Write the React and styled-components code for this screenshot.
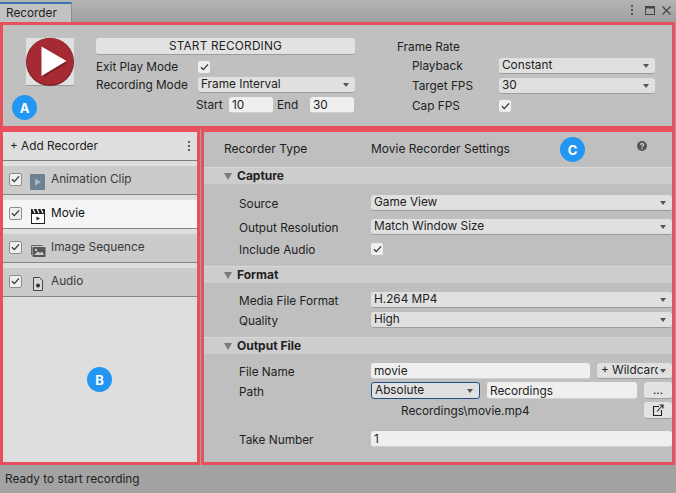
import React from 'react';
import styled, { createGlobalStyle } from 'styled-components';

const GlobalStyle = createGlobalStyle`
    html, body {
        margin: 0;
        padding: 0;
        background: #a3a3a3;
    }
    * {
        box-sizing: border-box;
    }
`;

const RED = '#e8505b';
const TEXT = '#222';

const Window = styled.div`
    width: 676px;
    height: 493px;
    display: flex;
    flex-direction: column;
    overflow: hidden;
    background: #a3a3a3;
    color: ${TEXT};
    font-family: Inter, "Liberation Sans", sans-serif;
    font-size: 11.8px;
    line-height: 16px;
`;

const TabBar = styled.div`
    height: 22px;
    flex: none;
    display: flex;
    align-items: flex-end;
    justify-content: space-between;
    background: linear-gradient(#b4b4b4, #a0a0a0);
`;
const Tab = styled.div`
    width: 72px;
    height: 20px;
    padding-left: 6px;
    background: #c2c2c2;
    border-top: 2px solid #3a72b0;
    border-right: 1px solid #8f8f8f;
    line-height: 18px;
`;
const WindowIcons = styled.div`
    display: flex;
    align-items: center;
    gap: 7px;
    padding: 0 5px 6px 0;
`;
const MenuDots = styled.span`
    display: flex;
    margin-right: 4px;
`;

const TopPanel = styled.section`
    position: relative;
    height: 107px;
    flex: none;
    margin-right: 1px;
    padding: 13px 17px 0 23px;
    display: flex;
    background: #c0c0c0;
    border: 3px solid ${RED};
`;
const PlayButton = styled.div`
    width: 48px;
    height: 48px;
    flex: none;
    background: #e0e0e0;
    border-bottom: 1px solid #9a9a9a;
`;
const RecordColumn = styled.div`
    width: 259px;
    flex: none;
    margin-left: 22px;
    display: flex;
    flex-direction: column;
`;
const StartButton = styled.div`
    height: 17px;
    text-align: center;
    line-height: 16px;
    letter-spacing: 0.2px;
    background: #e2e2e2;
    border-radius: 3px;
    border-bottom: 1px solid #9c9c9c;
`;
const ModeRow = styled.div`
    height: 16px;
    margin-top: ${({ $top }) => $top || 0}px;
    display: grid;
    grid-template-columns: 102px 1fr;
    align-items: center;
`;
const IntervalRow = styled.div`
    margin-top: 4px;
    display: flex;
    align-items: center;
    padding-left: 100px;
`;
const FrameColumn = styled.div`
    width: 258px;
    flex: none;
    margin-left: 42px;
    margin-top: 1px;
    display: flex;
    flex-direction: column;
`;
const FrameRow = styled.div`
    height: 16px;
    margin-top: ${({ $top }) => $top || 0}px;
    padding-left: 15px;
    display: grid;
    grid-template-columns: 87px 1fr;
    align-items: center;
`;

const Middle = styled.div`
    flex: 1;
    min-height: 0;
    display: flex;
`;

const ListPanel = styled.section`
    position: relative;
    width: 200px;
    flex: none;
    display: flex;
    flex-direction: column;
    background: #dedede;
    border: 3px solid ${RED};
`;
const AddRow = styled.div`
    height: 29px;
    flex: none;
    padding: 0 6px 0 7px;
    display: flex;
    align-items: center;
    justify-content: space-between;
    background: #dedede;
    border-bottom: 1px solid #7d7d7d;
`;
const RecorderRow = styled.div`
    height: 29px;
    flex: none;
    margin-top: 5px;
    padding: 0 0 2px 6px;
    display: flex;
    align-items: center;
    background: ${({ $active }) => ($active ? '#f5f5f5' : '#cbcbcb')};
    color: ${({ $active }) => ($active ? '#111' : '#3a3a3a')};
    border-bottom: 1px solid #868686;
`;
const RowIcon = styled.span`
    width: 16px;
    height: 16px;
    margin: 5px 5px 0 8px;
    display: flex;
`;

const SettingsPanel = styled.section`
    position: relative;
    flex: 1;
    margin: 0 1px 0 1px;
    display: flex;
    flex-direction: column;
    background: #bfbfbf;
    border: 3px solid ${RED};
`;
const TypeRow = styled.div`
    height: 35px;
    flex: none;
    padding: 0 0 2px 20px;
    display: grid;
    grid-template-columns: 147px 1fr;
    align-items: center;
    font-size: 12px;
`;
const HelpIcon = styled.span`
    position: absolute;
    top: 9px;
    right: 25px;
    display: flex;
`;
const SectionHeader = styled.div`
    height: 17px;
    flex: none;
    padding-left: 20px;
    display: flex;
    align-items: center;
    gap: 5px;
    font-weight: 700;
    font-size: 12px;
    background: #cdcdcd;
    border-top: 1px solid #d8d8d8;
`;
const Triangle = styled.span`
    width: 0;
    height: 0;
    border-left: 4px solid transparent;
    border-right: 4px solid transparent;
    border-top: 7px solid #7a7a7a;
`;
const SectionBody = styled.div`
    flex: none;
    padding: ${({ $y }) => $y}px 0 ${({ $y }) => $y}px 35px;
    display: flex;
    flex-direction: column;
    gap: ${({ $gap }) => $gap}px;
`;
const Field = styled.div`
    margin-top: ${({ $top }) => $top || 0}px;
    display: grid;
    grid-template-columns: 132px 1fr;
    align-items: center;
`;
const Controls = styled.div`
    display: flex;
    align-items: center;
    gap: 7px;
`;
const Label = styled.span`
    white-space: nowrap;
    line-height: 12px;
    position: relative;
    top: 1px;
`;

const Select = styled.div`
    position: relative;
    height: ${({ $focus }) => ($focus ? 17 : 16)}px;
    width: ${({ $w }) => ($w ? `${$w}px` : 'auto')};
    flex: ${({ $w }) => ($w ? 'none' : 1)};
    padding: 0 18px 0 3px;
    line-height: 15px;
    white-space: nowrap;
    overflow: hidden;
    background: #e0e0e0;
    border-radius: 3px;
    border: ${({ $focus }) => ($focus ? '1px solid #1f4f86' : 'none')};
    border-bottom: 1px solid ${({ $focus }) => ($focus ? '#1f4f86' : '#9c9c9c')};
    &::after {
        content: '';
        position: absolute;
        top: 6px;
        right: 6px;
        border-left: 3.5px solid transparent;
        border-right: 3.5px solid transparent;
        border-top: 4px solid #555;
    }
`;
const WildcardText = styled.span`
    display: block;
    width: 57px;
    margin-left: 1px;
    overflow: hidden;
`;
const Input = styled.div`
    height: ${({ $h }) => $h || 16}px;
    width: ${({ $w }) => ($w ? `${$w}px` : 'auto')};
    flex: ${({ $w }) => ($w ? 'none' : 1)};
    padding: 0 3px;
    line-height: ${({ $h }) => ($h || 16) + 1}px;
    background: #efefef;
    border-radius: 3px;
    border-bottom: 1px solid #cfcfcf;
`;
const IntervalLabel = styled.span`
    width: ${({ $w }) => $w}px;
    padding-left: ${({ $pad }) => $pad || 0}px;
    flex: none;
`;
const SmallButton = styled.div`
    width: 28px;
    height: 17px;
    flex: none;
    display: flex;
    align-items: center;
    justify-content: center;
    line-height: 14px;
    background: #e2e2e2;
    border-radius: 3px;
    border-bottom: 1px solid #9c9c9c;
`;
const OutputPath = styled.div`
    display: flex;
    align-items: center;
    justify-content: space-between;
    padding-left: 30px;
`;

const Box = styled.span`
    width: ${({ $framed }) => ($framed ? 13 : 12)}px;
    height: ${({ $framed }) => ($framed ? 13 : 12)}px;
    flex: none;
    display: flex;
    align-items: center;
    justify-content: center;
    background: #efefef;
    border-radius: 2px;
    border: ${({ $framed }) => ($framed ? '1px solid #8c8c8c' : 'none')};
`;

const Badge = styled.span`
    position: absolute;
    width: 25px;
    height: 25px;
    top: ${({ $top }) => $top}px;
    left: ${({ $left }) => $left}px;
    display: flex;
    align-items: center;
    justify-content: center;
    color: #fff;
    font-weight: 700;
    font-size: 13px;
    background: #2196f3;
    border-radius: 50%;
`;

const StatusBar = styled.footer`
    flex: none;
    height: 28px;
    padding-left: 5px;
    display: flex;
    align-items: center;
    background: #a3a3a3;
`;

const Check = ({ framed }) => (
    <Box $framed={framed}>
        <svg width="9" height="8" viewBox="0 0 9 8">
            <path d="M1 4.2 3.3 6.6 8 1.4" fill="none" stroke="#333" strokeWidth="1.3" />
        </svg>
    </Box>
);

const PlayIcon = () => (
    <PlayButton>
        <svg width="48" height="48" viewBox="0 0 48 48">
            <circle cx="24" cy="24" r="24" fill="#7b2026" />
            <circle cx="24" cy="23.4" r="23.4" fill="#a52a33" />
            <path d="M16 11 41 25 18 39Z" fill="#7d2026" />
            <path d="M15.5 8.5 40.5 23 15.5 38Z" fill="#fff" />
        </svg>
    </PlayButton>
);

const KebabIcon = () => (
    <svg width="4" height="12" viewBox="0 0 4 12">
        <circle cx="2" cy="2" r="1.1" fill="#444" />
        <circle cx="2" cy="6" r="1.1" fill="#444" />
        <circle cx="2" cy="10" r="1.1" fill="#444" />
    </svg>
);

const ClipIcon = () => (
    <svg width="16" height="16" viewBox="0 0 16 16">
        <rect x="0" y="0" width="15" height="16" rx="1" fill="#6d8290" />
        <path d="M5 4.5 11 8 5 11.5Z" fill="#a6bcc9" />
    </svg>
);

const MovieIcon = () => (
    <svg width="16" height="16" viewBox="0 0 16 16">
        <rect x="1.5" y="5.5" width="13" height="10" fill="#fff" stroke="#222" />
        <path d="M1 1h14v4H1z" fill="#222" />
        <path d="M3 1 5 5M7 1l2 4M11 1l2 4" stroke="#fff" strokeWidth="1.2" />
        <path d="M6.5 8.5 10 10.5 6.5 12.5Z" fill="#222" />
    </svg>
);

const ImageIcon = () => (
    <svg width="16" height="16" viewBox="0 0 16 16">
        <path d="M1.5 13V3.5h11" fill="none" stroke="#666" />
        <rect x="2.5" y="5" width="13" height="10" rx="1" fill="#555" />
        <circle cx="6" cy="8" r="1.2" fill="#ccc" />
        <path d="M4 13 8 9.5 10 11l2-1.5 2 3.5Z" fill="#ccc" />
    </svg>
);

const AudioIcon = () => (
    <svg width="16" height="16" viewBox="0 0 16 16">
        <path d="M3.5 1.5h6l3 3v10h-9Z" fill="#d8d8d8" stroke="#444" />
        <circle cx="8" cy="9.5" r="2" fill="#333" />
    </svg>
);

const recorders = [
    { name: 'Animation Clip', icon: <ClipIcon /> },
    { name: 'Movie', icon: <MovieIcon />, active: true },
    { name: 'Image Sequence', icon: <ImageIcon /> },
    { name: 'Audio', icon: <AudioIcon /> },
];

const App = () => (
    <Window>
        <GlobalStyle />
        <TabBar>
            <Tab>Recorder</Tab>
            <WindowIcons>
                <MenuDots><KebabIcon /></MenuDots>
                <svg width="10" height="9" viewBox="0 0 10 9">
                    <rect x="0.5" y="0.5" width="9" height="8" fill="none" stroke="#444" />
                    <path d="M0 1.5h10" stroke="#444" strokeWidth="2" />
                </svg>
                <svg width="9" height="9" viewBox="0 0 9 9">
                    <path d="M.5.5l8 8M8.5.5l-8 8" stroke="#444" strokeWidth="1.2" />
                </svg>
            </WindowIcons>
        </TabBar>

        <TopPanel>
            <PlayIcon />
            <RecordColumn>
                <StartButton>START RECORDING</StartButton>
                <ModeRow $top={4}>
                    <span>Exit Play Mode</span>
                    <Check />
                </ModeRow>
                <ModeRow $top={2}>
                    <span>Recording Mode</span>
                    <Select>Frame Interval</Select>
                </ModeRow>
                <IntervalRow>
                    <IntervalLabel $w={33}>Start</IntervalLabel>
                    <Input $w={44}>10</Input>
                    <IntervalLabel $w={37} $pad={4}>End</IntervalLabel>
                    <Input $w={44}>30</Input>
                </IntervalRow>
            </RecordColumn>
            <FrameColumn>
                <span>Frame Rate</span>
                <FrameRow $top={3}>
                    <span>Playback</span>
                    <Select>Constant</Select>
                </FrameRow>
                <FrameRow $top={4}>
                    <span>Target FPS</span>
                    <Select>30</Select>
                </FrameRow>
                <FrameRow $top={4}>
                    <span>Cap FPS</span>
                    <Check />
                </FrameRow>
            </FrameColumn>
            <Badge $top={70} $left={9}>A</Badge>
        </TopPanel>

        <Middle>
            <ListPanel>
                <AddRow>
                    <span>+ Add Recorder</span>
                    <KebabIcon />
                </AddRow>
                {recorders.map((item) => (
                    <RecorderRow key={item.name} $active={item.active}>
                        <Check framed />
                        <RowIcon>{item.icon}</RowIcon>
                        <span>{item.name}</span>
                    </RecorderRow>
                ))}
                <Badge $top={235} $left={84}>B</Badge>
            </ListPanel>

            <SettingsPanel>
                <TypeRow>
                    <span>Recorder Type</span>
                    <span>Movie Recorder Settings</span>
                </TypeRow>
                <HelpIcon>
                    <svg width="10" height="10" viewBox="0 0 10 10">
                        <circle cx="5" cy="5" r="5" fill="#555" />
                        <path d="M3.4 3.8C3.5 2.2 6.6 2.2 6.6 3.8 6.6 5 5 4.8 5 6.2" fill="none" stroke="#ddd" strokeWidth="1.1" />
                        <circle cx="5" cy="7.8" r=".7" fill="#ddd" />
                    </svg>
                </HelpIcon>
                <Badge $top={5} $left={356}>C</Badge>

                <SectionHeader><Triangle />Capture</SectionHeader>
                <SectionBody $y={11} $gap={8}>
                    <Field>
                        <Label>Source</Label>
                        <Select>Game View</Select>
                    </Field>
                    <Field>
                        <Label>Output Resolution</Label>
                        <Select>Match Window Size</Select>
                    </Field>
                    <Field>
                        <Label>Include Audio</Label>
                        <Check />
                    </Field>
                </SectionBody>

                <SectionHeader><Triangle />Format</SectionHeader>
                <SectionBody $y={9} $gap={4}>
                    <Field>
                        <Label>Media File Format</Label>
                        <Select>H.264 MP4</Select>
                    </Field>
                    <Field>
                        <Label>Quality</Label>
                        <Select>High</Select>
                    </Field>
                </SectionBody>

                <SectionHeader><Triangle />Output File</SectionHeader>
                <SectionBody $y={9} $gap={3}>
                    <Field>
                        <Label>File Name</Label>
                        <Controls>
                            <Input>movie</Input>
                            <Select $w={75}><WildcardText>+ Wildcards</WildcardText></Select>
                        </Controls>
                    </Field>
                    <Field>
                        <Label>Path</Label>
                        <Controls>
                            <Select $w={109} $focus>Absolute</Select>
                            <Input $h={17}>Recordings</Input>
                            <SmallButton>...</SmallButton>
                        </Controls>
                    </Field>
                    <Field>
                        <span />
                        <OutputPath>
                            <span>Recordings\movie.mp4</span>
                            <SmallButton>
                                <svg width="12" height="12" viewBox="0 0 12 12">
                                    <path d="M7 2.5H1.5v9h8V6M5 7.5 11 1M7.5 1H11V4.5" fill="none" stroke="#222" strokeWidth="1.1" />
                                </svg>
                            </SmallButton>
                        </OutputPath>
                    </Field>
                    <Field $top={9}>
                        <Label>Take Number</Label>
                        <Input>1</Input>
                    </Field>
                </SectionBody>
            </SettingsPanel>
        </Middle>

        <StatusBar>Ready to start recording</StatusBar>
    </Window>
);

export default App;
